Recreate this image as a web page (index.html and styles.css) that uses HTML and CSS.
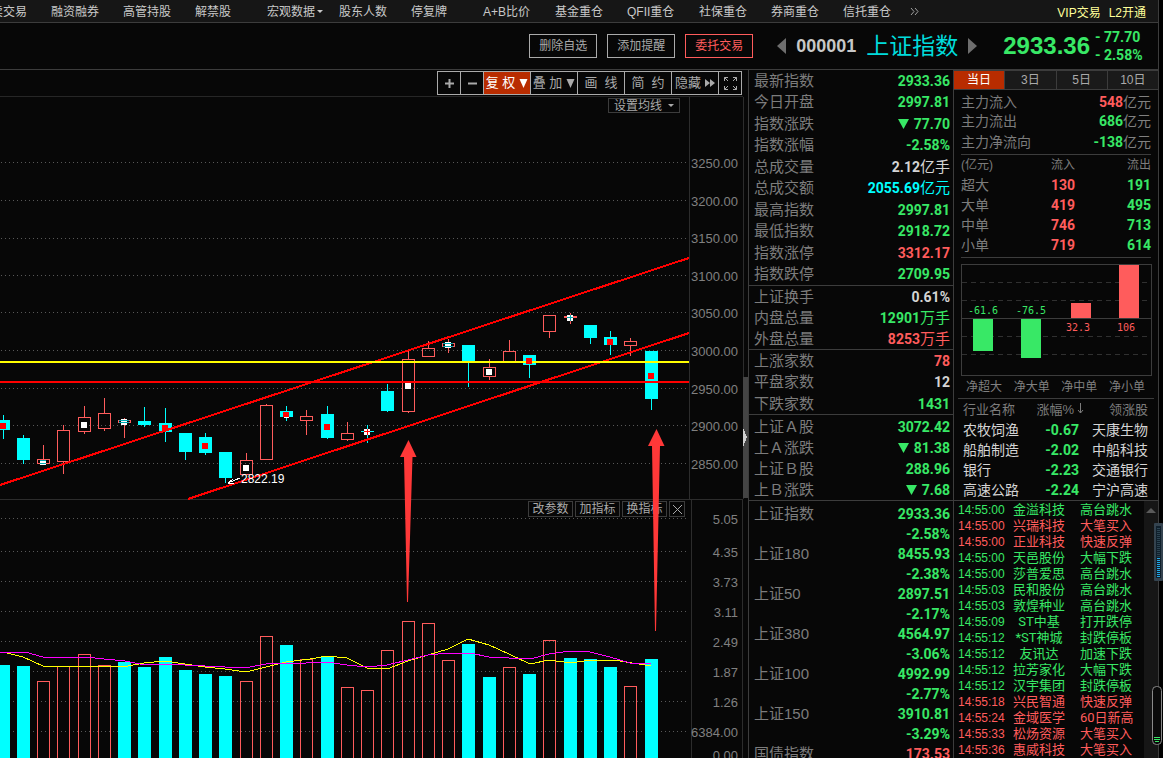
FILE: index.html
```html
<!DOCTYPE html>
<html lang="zh-CN">
<head>
<meta charset="utf-8">
<title>上证指数 000001</title>
<link rel="stylesheet" href="styles.css">
</head>
<body>
<div class="app">
  <nav class="nav">
    <div class="nav-items">
      <a href="#">买卖交易</a><a href="#">融资融券</a><a href="#">高管持股</a><a href="#">解禁股</a><a href="#">宏观数据<svg class="caret" viewBox="0 0 6 3"><path d="M0 0h6L3 3z"/></svg></a><a href="#">股东人数</a><a href="#">停复牌</a><a href="#">A+B比价</a><a href="#">基金重仓</a><a href="#">QFII重仓</a><a href="#">社保重仓</a><a href="#">券商重仓</a><a href="#">信托重仓</a>
      <a class="more" href="#" aria-label="更多"><svg viewBox="0 0 9 9"><path d="M1 1l3 3.500-3 3.500M5 1l3 3.500-3 3.500"/></svg></a>
    </div>
    <div class="nav-vip"><a href="#">VIP交易</a><a href="#">L2开通</a></div>
  </nav>

  <header class="header">
    <div class="actions">
      <button>删除自选</button>
      <button>添加提醒</button>
      <button class="trade">委托交易</button>
    </div>
    <div class="stock">
      <button class="step" aria-label="上一只"><svg viewBox="0 0 9 16"><path d="M9 0v16L0 8z"/></svg></button>
      <span class="code">000001</span>
      <h1>上证指数</h1>
      <button class="step" aria-label="下一只"><svg viewBox="0 0 9 16"><path d="M0 0v16l9-8z"/></svg></button>
    </div>
    <strong class="price">2933.36</strong>
    <div class="delta"><span><i>-</i>77.70</span><span><i>-</i>2.58%</span></div>
  </header>

  <main class="main">
    <section class="chart-col">
      <div class="toolbar">
        <button class="sq" aria-label="放大"><svg viewBox="0 0 9 9"><path d="M0 3.500h9v2H0zM3.500 0h2v9h-2z"/></svg></button>
        <button class="sq" aria-label="缩小"><svg viewBox="0 0 9 9"><path d="M0 3.500h9v2H0z"/></svg></button>
        <button class="active">复 权<svg class="tri" viewBox="0 0 8 9"><path d="M0 0h8L4 9z"/></svg></button>
        <button>叠 加<svg class="tri" viewBox="0 0 8 9"><path d="M0 0h8L4 9z"/></svg></button>
        <button>画 &nbsp;线</button>
        <button>简 &nbsp;约</button>
        <button>隐藏<svg class="ff" viewBox="0 0 10 8"><path d="M0 0l5 4-5 4zM5 0l5 4-5 4z"/></svg></button>
        <button class="sq" aria-label="全屏"><svg class="full" viewBox="0 0 13 13"><path d="M.5 4V.5H4M.5 .5L4 4M9 .5h3.500V4M12.500 .5L9 4M.5 9v3.500H4M.5 12.500L4 9M9 12.500h3.500V9M12.500 12.500L9 9"/></svg></button>
      </div>
      <div class="chart">
        <svg class="plot" viewBox="0 97 748 661">
          <g class="frame">
            <path d="M689.5 97V499M743.500 97V499M0 499.500H743M691 500V758M742 500V758"/>
          </g>
          <g class="grid">
            <path d="M1 162.500H689M1 200.500H689M1 238.500H689M1 275.500H689M1 312.500H689M1 350.500H689M1 388.500H689M1 425.500H689M1 463.500H689"/>
            <path d="M1 518.500H689M1 551.500H689M1 581.500H689M1 611.500H689M1 641.500H689M1 671.500H689M1 701.500H689M1 731.500H689"/>
          </g>
          <g class="axis">
            <text x="738" y="168">3250.00</text><text x="738" y="206">3200.00</text><text x="738" y="243">3150.00</text><text x="738" y="281">3100.00</text><text x="738" y="318">3050.00</text><text x="738" y="356">3000.00</text><text x="738" y="394">2950.00</text><text x="738" y="431">2900.00</text><text x="738" y="469">2850.00</text>
            <text x="738" y="524">5.05</text><text x="738" y="557">4.35</text><text x="738" y="587">3.73</text><text x="738" y="617">3.11</text><text x="738" y="647">2.49</text><text x="738" y="677">1.87</text><text x="738" y="707">1.26</text><text x="738" y="737">6384.00</text><text x="738" y="760">0.00</text>
          </g>

          <path class="fall" d="M-3 420h13v10h-13zM3 415h1v24h-1zM17 438h13v22h-13zM23 435h1v29h-1zM138 421h13v4h-13zM144 407h1v20h-1zM159 423h13v9h-13zM165 408h1v34h-1zM179 433h13v19h-13zM185 450h1v10h-1zM199 437h13v16h-13zM205 433h1v22h-1zM219 452h13v26h-13zM225 478h1v5h-1zM280 411h13v6h-13zM286 406h1v15h-1zM321 414h13v24h-13zM327 406h1v33h-1zM361 431h13v1h-13zM367 425h1v18h-1zM381 391h13v20h-13zM387 384h1v28h-1zM462 345h13v17h-13zM468 362h1v25h-1zM523 355h13v10h-13zM529 365h1v13h-1zM584 325h13v13h-13zM590 338h1v6h-1zM604 337h13v8h-13zM610 331h1v24h-1zM645 351h13v48h-13zM651 399h1v11h-1z"/>
          <path class="rise" d="M37.500 459.500h12v4h-12zM43.500 445V459M57.500 430.500h12v31h-12zM63.500 425V430M63.500 462V474M78.500 417.500h12v14h-12zM84.500 406V417M84.500 432V434M98.500 413.500h12v15h-12zM104.500 398V413M104.500 429V431M118.500 420.500h12v2h-12zM124.500 418V438M240.500 460.500h12v14h-12zM246.500 453V460M260.500 405.500h12v54h-12zM266.500 404V405M300.500 416.500h12v4h-12zM306.500 410V416M306.500 421V435M341.500 433.500h12v6h-12zM347.500 422V433M347.500 440V441M402.500 359.500h12v52h-12zM408.500 351V359M408.500 412V413M422.500 348.500h12v8h-12zM428.500 341V348M442.500 343.500h12v3h-12zM448.500 339V343M448.500 347V353M483.500 367.500h12v9h-12zM489.500 359V367M489.500 377V380M503.500 351.500h12v10h-12zM509.500 340V351M543.500 315.500h12v16h-12zM549.500 332V338M564 316.500H577M564 317.500H577M570.500 313V324M624.500 341.500h12v4h-12zM630.500 338V341M630.500 346V356"/>

          <path class="rise" d="M37.500 780V681.500h12V780M57.500 780V666.500h12V780M78.500 780V654.500h12V780M98.500 780V665.500h12V780M240.500 780V681.500h12V780M260.500 780V636.500h12V780M300.500 780V659.500h12V780M341.500 780V687.500h12V780M361.500 780V690.500h12V780M381.500 780V650.500h12V780M402.500 780V621.500h12V780M422.500 780V623.500h12V780M442.500 780V660.500h12V780M503.500 780V667.500h12V780M543.500 780V640.500h12V780M624.500 780V686.500h12V780"/>
          <path class="fall" d="M-3 665h13v93h-13zM17 666h13v92h-13zM118 662h13v96h-13zM138 667h13v91h-13zM159 657h13v101h-13zM179 670h13v88h-13zM199 674h13v84h-13zM219 676h13v82h-13zM280 645h13v113h-13zM321 657h13v101h-13zM462 644h13v114h-13zM483 677h13v81h-13zM523 674h13v84h-13zM564 658h13v100h-13zM584 659h13v99h-13zM604 667h13v91h-13zM645 659h13v99h-13z"/>

          <path class="channel" d="M0 485L689 258M188 499L689 333"/>
          <path class="level-y" d="M0 362H689"/>
          <path class="level-r" d="M0 382H689"/>

          <path class="mark-r" d="M0 423h6v6h-6zM162 425h6v6h-6zM202 443h6v6h-6zM283 412h6v5h-6zM324 424h6v6h-6zM526 358h6v6h-6zM607 339h6v6h-6zM648 373h6v6h-6z"/>
          <path class="mark-w" d="M40 460h6v5h-6zM81 422h6v6h-6zM121 419h6v6h-6zM243 465h6v6h-6zM284 417h5v1h-5zM364 429h6v6h-6zM405 383h6v6h-6zM445 342h6v6h-6zM486 369h6v6h-6zM567 315h6v6h-6z"/>
          <path class="mark-c" d="M40 460.500h6M40 463.500h6M119 420.500h10M119 422.500h10M443 343.500h10M443 346.500h10M567 317.500h6M570.500 315v6"/>
          <path class="mark-x" d="M364 431.500h6M367.500 429v6"/>

          <path class="ma-y" d="M0 652L7 653L23 657L43 666L64 667L84 666L128 666L144 663L165 661L185 664L205 667L225 669L246 672L266 667L286 662L310 659L327 656L347 658L367 668L387 669L408 661L428 655L448 649L468 639L489 645L509 654L530 664L549 660L571 663L590 660L620 661L651 666"/>
          <path class="ma-m" d="M0 652H25L43 657L60 658L85 657L104 659L125 661L145 665L165 664L185 665L205 666L225 667H250L266 664L286 663H306L327 662L347 665L367 667L387 665L408 660L428 655L448 653H470L489 657L509 658L530 659L549 654L570 651L590 652L610 657L630 663H651"/>

          <path class="low-line" d="M240 478L229 482.500M233 479l-5 4 6 1"/>
          <text class="low" x="241" y="483">2822.19</text>

          <path class="strip" d="M743 377h5v121h-5z"/>
          <path class="grip" d="M743 428l4 9-4 10z"/>
        </svg>
        <button class="ma-set">设置均线<svg class="caret" viewBox="0 0 6 3"><path d="M0 0h6L3 3z"/></svg></button>
        <div class="sub-tools">
          <button>改参数</button><button>加指标</button><button>换指标</button><button class="close" aria-label="关闭"><svg viewBox="0 0 11 11"><path d="M1 1l9 9M10 1l-9 9"/></svg></button>
        </div>
        <svg class="notes" viewBox="0 97 748 661">
          <path d="M408.500 440L416.500 457H412.500L408 602H407L404 457H400z"/>
          <path d="M656.500 429L664.500 446H660L656 631H655L652 446H648z"/>
        </svg>
      </div>
    </section>

    <aside class="quote">
      <table>
        <tr><th>最新指数</th><td class="g">2933.36</td></tr>
        <tr><th>今日开盘</th><td class="g">2997.81</td></tr>
        <tr><th>指数涨跌</th><td class="g"><svg class="dn" viewBox="0 0 11 10"><path d="M0 0h11L5.500 10z"/></svg>77.70</td></tr>
        <tr><th>指数涨幅</th><td class="g">-2.58%</td></tr>
        <tr><th>总成交量</th><td class="w">2.12<span>亿手</span></td></tr>
        <tr><th>总成交额</th><td class="c">2055.69<span>亿元</span></td></tr>
        <tr><th>最高指数</th><td class="g">2997.81</td></tr>
        <tr><th>最低指数</th><td class="g">2918.72</td></tr>
        <tr><th>指数涨停</th><td class="r">3312.17</td></tr>
        <tr><th>指数跌停</th><td class="g">2709.95</td></tr>
      </table>
      <table class="even">
        <tr><th>上证换手</th><td class="w">0.61%</td></tr>
        <tr><th>内盘总量</th><td class="g">12901<span>万手</span></td></tr>
        <tr><th>外盘总量</th><td class="r">8253<span>万手</span></td></tr>
      </table>
      <table>
        <tr><th>上涨家数</th><td class="r">78</td></tr>
        <tr><th>平盘家数</th><td class="w">12</td></tr>
        <tr><th>下跌家数</th><td class="g">1431</td></tr>
      </table>
      <table class="even">
        <tr><th>上证Ａ股</th><td class="g">3072.42</td></tr>
        <tr><th>上Ａ涨跌</th><td class="g"><svg class="dn" viewBox="0 0 11 10"><path d="M0 0h11L5.500 10z"/></svg>81.38</td></tr>
        <tr><th>上证Ｂ股</th><td class="g">288.96</td></tr>
        <tr><th>上Ｂ涨跌</th><td class="g"><svg class="dn" viewBox="0 0 11 10"><path d="M0 0h11L5.500 10z"/></svg>7.68</td></tr>
      </table>
      <table class="indices">
        <tr><th>上证指数</th><td class="g">2933.36</td></tr><tr><th></th><td class="g">-2.58%</td></tr>
        <tr><th>上证180</th><td class="g">8455.93</td></tr><tr><th></th><td class="g">-2.38%</td></tr>
        <tr><th>上证50</th><td class="g">2897.51</td></tr><tr><th></th><td class="g">-2.17%</td></tr>
        <tr><th>上证380</th><td class="g">4564.97</td></tr><tr><th></th><td class="g">-3.06%</td></tr>
        <tr><th>上证100</th><td class="g">4992.99</td></tr><tr><th></th><td class="g">-2.77%</td></tr>
        <tr><th>上证150</th><td class="g">3910.81</td></tr><tr><th></th><td class="g">-3.29%</td></tr>
        <tr><th>国债指数</th><td class="r">173.53</td></tr>
      </table>
    </aside>

    <aside class="flow">
      <div class="tabs"><button class="active">当日</button><button>3日</button><button>5日</button><button>10日</button></div>
      <table class="net">
        <tr><th>主力流入</th><td class="r">548<span>亿元</span></td></tr>
        <tr><th>主力流出</th><td class="g">686<span>亿元</span></td></tr>
        <tr><th>主力净流向</th><td class="g">-138<span>亿元</span></td></tr>
      </table>
      <table class="sizes">
        <thead><tr><th>(亿元)</th><th>流入</th><th>流出</th></tr></thead>
        <tbody>
          <tr><th>超大</th><td class="r">130</td><td class="g">191</td></tr>
          <tr><th>大单</th><td class="r">419</td><td class="g">495</td></tr>
          <tr><th>中单</th><td class="r">746</td><td class="g">713</td></tr>
          <tr><th>小单</th><td class="r">719</td><td class="g">614</td></tr>
        </tbody>
      </table>
      <svg class="bars" viewBox="0 0 191 112">
        <path class="dash" d="M1 18.500H190M1 36.500H190M1 72.500H190M1 90.500H190"/>
        <path class="line" d="M.5 .5h190v111H.5zM0 54.500H191"/>
        <path class="pos" d="M110 39h20v15h-20zM158 1h20v53h-20z"/>
        <path class="neg" d="M12 55h20v32H12zM60 55h20v39H60z"/>
        <text class="neg" x="7" y="50">-61.6</text><text class="neg" x="55" y="50">-76.5</text>
        <text class="pos" x="105" y="67">32.3</text><text class="pos" x="156" y="67">106</text>
      </svg>
      <div class="legend"><span>净超大</span><span>净大单</span><span>净中单</span><span>净小单</span></div>
      <table class="sector">
        <thead><tr><th>行业名称</th><th>涨幅%<svg class="sort" viewBox="0 0 7 11"><path d="M3.500 0v10M1 7l2.500 3L6 7"/></svg></th><th>领涨股</th></tr></thead>
        <tbody>
          <tr><th>农牧饲渔</th><td class="g">-0.67</td><td>天康生物</td></tr>
          <tr><th>船舶制造</th><td class="g">-2.02</td><td>中船科技</td></tr>
          <tr><th>银行</th><td class="g">-2.23</td><td>交通银行</td></tr>
          <tr><th>高速公路</th><td class="g">-2.24</td><td>宁沪高速</td></tr>
        </tbody>
      </table>
      <div class="ticker">
        <table>
          <tr class="g"><td>14:55:00</td><td>金溢科技</td><td>高台跳水</td></tr>
          <tr class="r"><td>14:55:00</td><td>兴瑞科技</td><td>大笔买入</td></tr>
          <tr class="r"><td>14:55:00</td><td>正业科技</td><td>快速反弹</td></tr>
          <tr class="g"><td>14:55:00</td><td>天邑股份</td><td>大幅下跌</td></tr>
          <tr class="g"><td>14:55:00</td><td>莎普爱思</td><td>高台跳水</td></tr>
          <tr class="g"><td>14:55:03</td><td>民和股份</td><td>高台跳水</td></tr>
          <tr class="g"><td>14:55:03</td><td>敦煌种业</td><td>高台跳水</td></tr>
          <tr class="g"><td>14:55:09</td><td>ST中基</td><td>打开跌停</td></tr>
          <tr class="g"><td>14:55:12</td><td>*ST神城</td><td>封跌停板</td></tr>
          <tr class="g"><td>14:55:12</td><td>友讯达</td><td>加速下跌</td></tr>
          <tr class="g"><td>14:55:12</td><td>拉芳家化</td><td>大幅下跌</td></tr>
          <tr class="g"><td>14:55:12</td><td>汉宇集团</td><td>封跌停板</td></tr>
          <tr class="r"><td>14:55:18</td><td>兴民智通</td><td>快速反弹</td></tr>
          <tr class="r"><td>14:55:24</td><td>金域医学</td><td>60日新高</td></tr>
          <tr class="r"><td>14:55:33</td><td>松炀资源</td><td>大笔买入</td></tr>
          <tr class="r"><td>14:55:36</td><td>惠威科技</td><td>大笔买入</td></tr>
        </table>
        <div class="track"><svg viewBox="0 0 10 5"><path d="M5 0l5 5H0z"/></svg></div>
        <svg class="meter" viewBox="0 0 9 58"><rect class="case" width="9" height="58" rx="1"/><rect class="slot" x="2" y="3" width="5" height="52"/><path class="off" d="M4.500 5V35"/><path class="on" d="M4.500 35V54"/></svg>
        <svg class="pill" viewBox="0 0 10 60"><rect x=".5" y=".5" width="9" height="58" rx="4"/><path d="M2 51.500h6M2 53.500h6M3 55.500h4"/></svg>
      </div>
    </aside>
  </main>
</div>
</body>
</html>
```

FILE: styles.css
```css
* { box-sizing: border-box; }

body {
  margin: 0;
  background: #000;
  color: #c8c8c8;
  font: 12px/18px "Liberation Sans", "Noto Sans CJK SC", sans-serif;
}

a { color: inherit; text-decoration: none; }

button {
  margin: 0;
  padding: 0;
  border: 0;
  background: none;
  color: inherit;
  font: inherit;
  white-space: nowrap;
}

svg { display: block; }

table { width: 100%; border-spacing: 0; }
th, td { padding: 0; line-height: 18px; white-space: nowrap; }
th { color: #7c7c7c; font-weight: 400; text-align: left; }
td { text-align: right; font-weight: 700; font-family: Roboto, "Noto Sans CJK SC", sans-serif; }
td span { font-weight: 400; }

.g { color: #38e866; }
.r { color: #ff5c5c; }
.w { color: #d4d4d4; }
.c { color: #00ffff; }

.app {
  display: flex;
  flex-direction: column;
  height: 100vh;
  padding-right: 4px;
  overflow: hidden;
}

/* Top navigation */
.nav {
  display: flex;
  justify-content: space-between;
  flex: none;
  height: 23px;
  padding: 1px 12px 0 0;
  border-right: 1px solid #3c3c3c;
  border-bottom: 1px solid #3c3c3c;
  background: #161616;
  line-height: 24px;
  overflow: hidden;
}
.nav-items { display: flex; margin-left: -21px; }
.nav-items a { display: flex; align-items: center; width: 72px; white-space: nowrap; }
.nav-items .more { width: 12px; margin-left: -5px; }
.more svg { width: 9px; height: 9px; fill: none; stroke: #a0a0a0; }
.nav-vip { display: flex; gap: 8px; color: #ffff99; white-space: nowrap; }
.caret { width: 6px; height: 3px; margin-left: 2px; fill: currentColor; }

/* Stock header */
.header {
  display: flex;
  align-items: center;
  justify-content: flex-end;
  flex: none;
  height: 47px;
  padding-right: 14px;
  border-right: 1px solid #3c3c3c;
  border-bottom: 1px solid #3c3c3c;
  background: #070707;
}
.actions { display: flex; gap: 10px; margin-right: 24px; color: #aaa; }
.actions button { width: 68px; height: 24px; border: 1px solid #aaa; line-height: 22px; }
.actions .trade { border-color: #ff5c5c; color: #ff5c5c; }
.stock { display: flex; align-items: center; gap: 10px; }
.step svg { width: 9px; height: 16px; fill: #6e6e6e; }
.code { font-size: 18px; font-weight: 700; }
.stock h1 { margin: 0; color: #00dcdc; font-size: 23px; font-weight: 400; line-height: 28px; }
.price { margin-left: 26px; color: #38e866; font-size: 24px; }
.delta {
  display: flex;
  flex-direction: column;
  width: 49px;
  margin-left: 5px;
  color: #38e866;
  font: 700 14px/18px Roboto, sans-serif;
}
.delta span { display: flex; }
.delta i { width: 9px; font-style: normal; }

/* Columns */
.main { display: flex; flex: 1; min-height: 0; background: #070707; }
.chart-col { flex: 1; min-width: 0; }

.toolbar {
  display: flex;
  justify-content: flex-end;
  height: 27px;
  margin-right: 5px;
  padding: 1px 1px 0 0;
  border-bottom: 1px solid #262626;
  color: #aaa;
}
.toolbar button {
  display: flex;
  align-items: center;
  justify-content: center;
  gap: 4px;
  width: 48px;
  height: 24px;
  margin-left: -1px;
  border: 1px solid #aaa;
  font-size: 13px;
}
.toolbar button.sq { width: 24px; }
.toolbar button.active { background: #b82c00; color: #fff; border-color: #aaa; }
.toolbar svg { width: 9px; height: 9px; fill: currentColor; }
.toolbar .ff { width: 10px; height: 8px; }
.toolbar .full { width: 13px; height: 13px; fill: none; stroke: currentColor; }

/* Chart */
.chart { position: relative; }
.plot, .notes { width: 100%; shape-rendering: crispEdges; }
.notes { position: absolute; top: 0; left: 0; pointer-events: none; fill: #ff3838; shape-rendering: auto; }
.frame { fill: none; stroke: #2c2c2c; }
.grid { fill: none; stroke: #585858; stroke-dasharray: 1 3; }
.axis { fill: #808080; font-size: 13px; text-anchor: end; }
.fall { fill: #00ffff; }
.rise { fill: none; stroke: #ff5c5c; }
.channel, .level-r { fill: none; stroke: #ff0000; stroke-width: 2; }
.level-y { stroke: #ffff00; stroke-width: 2; }
.mark-r { fill: #ff0000; }
.mark-w { fill: #fff; }
.mark-c { stroke: #00a8b0; }
.mark-x { stroke: #ff0000; }
.ma-y, .ma-m { fill: none; stroke: #ffff00; }
.ma-m { stroke: #ff00ff; }
.low-line { fill: none; stroke: #fff; }
.low { fill: #fff; font-size: 12px; }
.strip { fill: #444; }
.grip { fill: #d0d0d0; }

.ma-set, .sub-tools button { border: 1px solid #3c3c3c; background: #070707; color: #aaa; }
.ma-set {
  position: absolute;
  top: 1px;
  right: 68px;
  display: flex;
  align-items: center;
  justify-content: center;
  gap: 4px;
  width: 72px;
  height: 15px;
}
.sub-tools { position: absolute; top: 404px; right: 63px; display: flex; gap: 2px; }
.sub-tools button { width: 45px; height: 16px; line-height: 15px; }
.sub-tools .close { display: flex; align-items: center; justify-content: center; width: 16px; }
.close svg { width: 11px; height: 11px; fill: none; stroke: #aaa; }

/* Quote panel */
.quote { flex: none; width: 205px; border-left: 1px solid #3c3c3c; overflow: hidden; }
.quote table { padding: 0 3px 0 5px; border-bottom: 1px solid #3c3c3c; }
.quote tr { height: 21px; }
.quote tr:nth-child(even) { height: 22px; }
.quote .even tr { height: 21px; }
.quote .even + table + .even { padding-top: 1px; }
.quote th { font-size: 15px; }
.quote td { font-size: 14px; }
.quote td span { font-size: 15px; }
.quote .indices { padding-top: 3px; border-bottom: 0; }
.quote .indices tr { height: 20px; }
.dn { display: inline-block; width: 11px; height: 10px; margin-right: 5px; fill: currentColor; }

/* Capital flow panel */
.flow {
  flex: none;
  width: 206px;
  border-left: 1px solid #3c3c3c;
  border-right: 1px solid #3c3c3c;
}
.tabs { display: flex; height: 20px; border-top: 1px solid #3c3c3c; border-bottom: 1px solid #3c3c3c; }
.tabs button { flex: 1; border-right: 1px solid #3c3c3c; background: #1a1a1a; color: #aaa; line-height: 18px; }
.tabs button:last-child { border-right: 0; }
.tabs .active { background: #b82c00; color: #fff; }

.net, .sizes, .sector { font-size: 14px; }
.net, .sizes { width: 190px; margin: 0 7px; border-bottom: 1px solid #3c3c3c; }
.net { padding-top: 2px; }
.net tr { height: 19px; }
.net tr:last-child { height: 24px; }
.net td span { color: #808080; }
.sizes { padding-bottom: 2px; table-layout: fixed; }
.sizes tr { height: 20px; }
.sizes thead th { font-size: 12px; text-align: right; }
.sizes thead th:first-child { text-align: left; }
.sizes th:first-child { width: 38px; }

.bars { width: 191px; margin: 6px 7px 0; shape-rendering: crispEdges; }
.bars .dash { stroke: #303030; stroke-dasharray: 5 4; }
.bars .line { fill: none; stroke: #3c3c3c; }
.bars .pos { fill: #ff5c5c; }
.bars .neg { fill: #38e866; }
.bars text { font: 10px "DejaVu Sans Mono", monospace; }

.legend {
  display: flex;
  justify-content: space-between;
  height: 23px;
  margin: 0 4px;
  padding: 0 9px 0 8px;
  border-bottom: 1px solid #3c3c3c;
  color: #808080;
  line-height: 23px;
}

.sector { padding: 0 10px 0 9px; border-bottom: 1px solid #3c3c3c; }
.sector tr { height: 20px; }
.sector thead tr { height: 21px; }
.sector thead th { font-size: 13px; text-align: right; }
.sector thead th:first-child { text-align: left; }
.sector th:last-child { width: 64px; }
.sector tbody th, .sector td:last-child { width: auto; color: #d4d4d4; font-weight: 400; }
.sector td:nth-child(2) { padding-right: 5px; }
.sort { display: inline-block; width: 7px; height: 11px; margin-left: 3px; fill: none; stroke: currentColor; }

.ticker { position: relative; display: flex; }
.ticker table { flex: 1; padding: 1px 0 0 4px; }
.ticker tr { height: 16px; }
.ticker td { padding-right: 10px; font-weight: 400; font-size: 13px; line-height: 16px; text-align: center; }
.ticker td:first-child { width: 50px; padding: 0; font: 12px/16px "Liberation Sans", sans-serif; text-align: left; }
.ticker td:last-child { width: 64px; text-align: left; }
.track { flex: none; width: 14px; padding: 7px 2px; background: #161616; }
.track svg { width: 10px; height: 5px; fill: #5a5a5a; }
.meter { position: absolute; top: 22px; right: -5px; width: 9px; height: 58px; }
.meter .case { fill: #34434f; }
.meter .slot { fill: #10202c; }
.meter path { stroke-width: 3; stroke-dasharray: 1 1; }
.meter .off { stroke: #2c4452; }
.meter .on { stroke: #20a8e8; }
.pill { position: absolute; top: 185px; right: -4px; width: 10px; height: 60px; }
.pill rect { fill: #0a0a0a; stroke: #8a8a8a; }
.pill path { stroke: #38e866; }
```
